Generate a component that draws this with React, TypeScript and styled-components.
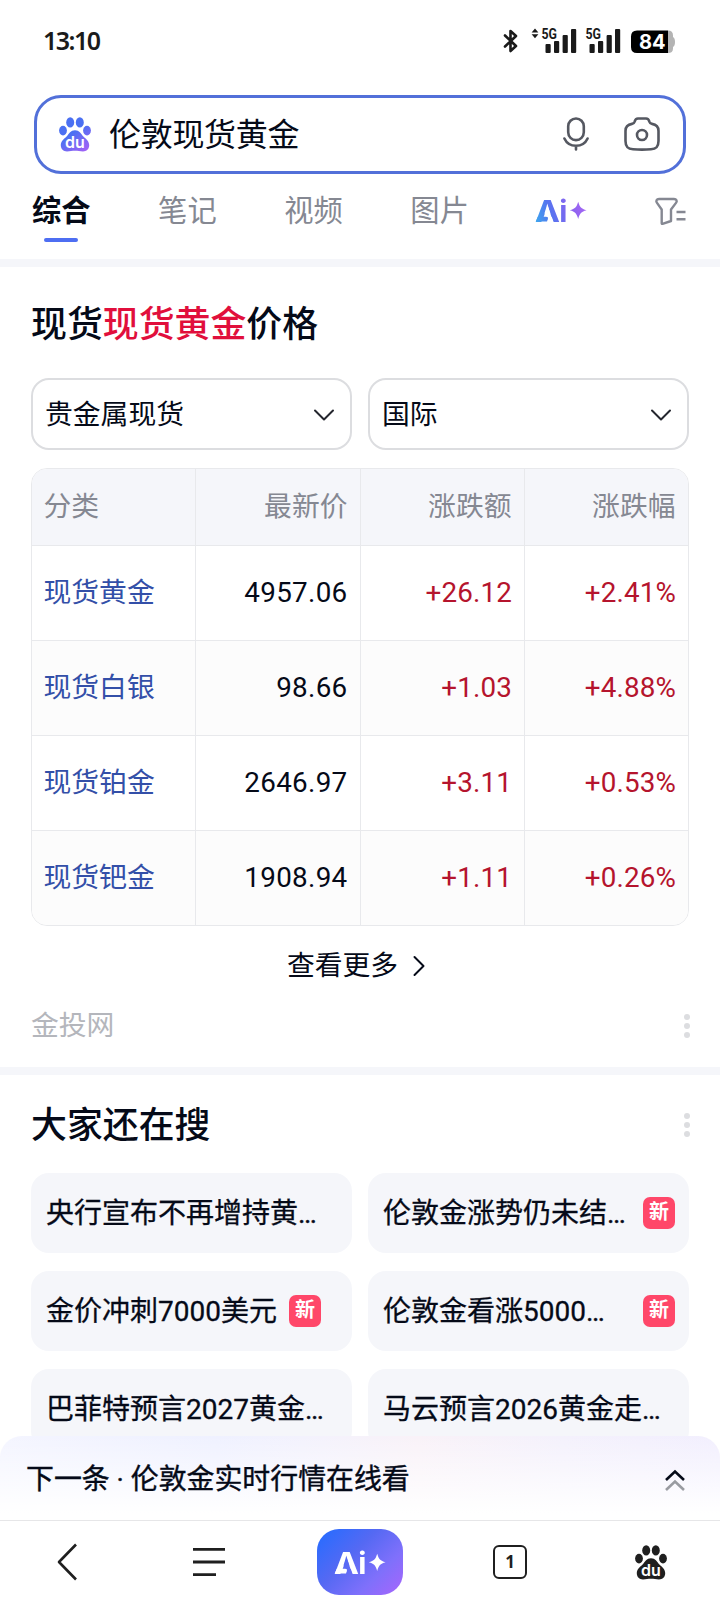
import React from "react";
import styled, { createGlobalStyle } from "styled-components";

const INK = "#050a18";
const GREY = "#858892";
const PANEL = "#f5f6fa";

const Global = createGlobalStyle`
  * { box-sizing: border-box; }
  body {
    margin: 0;
    background: #fff;
    font-family: Roboto, "Noto Sans CJK SC", sans-serif;
    color: ${INK};
  }
  svg { overflow: visible; }
`;

const Page = styled.div`
  width: 720px;
  height: 1604px;
  display: flex;
  flex-direction: column;
  overflow: hidden;
  background: #fff;
`;

const StatusBar = styled.header`
  height: 95px;
  flex: none;
  padding: 27px 44px 0 43px;
  display: flex;
  justify-content: space-between;
  align-items: flex-start;
`;

const Clock = styled.span`
  font: 600 25px/26px "Noto Sans", Roboto, sans-serif;
  letter-spacing: -1.5px;
  color: #1b1b1b;
`;

const SearchBox = styled.div`
  flex: none;
  height: 79px;
  margin: 0 34px;
  border: 3px solid #5270d9;
  border-radius: 27px;
  display: flex;
  align-items: center;
  padding: 0 23px 0 22px;
`;

const Query = styled.span`
  flex: 1;
  margin-left: 18px;
  padding-top: 1px;
  font-size: 32px;
  line-height: 46px;
  letter-spacing: -0.3px;
`;

const SearchTools = styled.div`
  display: flex;
  align-items: center;
  gap: 35px;
  margin-bottom: 2px;
`;

const Tabs = styled.nav`
  flex: none;
  height: 85px;
  padding: 15px 34px 0 32px;
  display: flex;
  justify-content: space-between;
  align-items: flex-start;
`;

const Tab = styled.div<{ $active?: boolean }>`
  display: flex;
  flex-direction: column;
  align-items: center;
  font-size: 29.3px;
  line-height: 44px;
  height: 54px;
  font-weight: ${(p) => (p.$active ? 700 : 400)};
  color: ${(p) => (p.$active ? INK : GREY)};
  &::after {
    content: "";
    width: 34px;
    height: 4px;
    margin-top: 5px;
    border-radius: 2px;
    background: ${(p) => (p.$active ? "#4e6ef2" : "transparent")};
  }
`;

const TabIcon = styled.div`
  height: 43px;
  display: flex;
  align-items: center;
`;

const Divider = styled.div`
  flex: none;
  height: 8px;
  background: ${PANEL};
`;

const Content = styled.main`
  flex: 1;
  min-height: 0;
  overflow: hidden;
`;

const PriceSection = styled.section`
  height: 800px;
  padding: 32px 31px 0;
`;

const Title = styled.h2`
  margin: 0;
  font-size: 35.9px;
  line-height: 52px;
  font-weight: 500;
  em {
    font-style: normal;
    color: #e10f3c;
  }
`;

const Selects = styled.div`
  margin-top: 27px;
  display: flex;
  gap: 16px;
`;

const Select = styled.div`
  flex: 1;
  height: 72px;
  border: 2px solid #dcdde0;
  border-radius: 18px;
  padding: 1px 16px 0 12px;
  display: flex;
  align-items: center;
  justify-content: space-between;
  font-size: 27.8px;
  line-height: 40px;
`;

const Table = styled.div`
  margin-top: 18px;
  border: 1px solid #e8e9ec;
  border-radius: 16px;
  overflow: hidden;
`;

const Row = styled.div<{ $head?: boolean; $shade?: boolean }>`
  display: grid;
  grid-template-columns: 163px 165px 164px 164px;
  height: ${(p) => (p.$head ? 76 : 95)}px;
  background: ${(p) => (p.$head ? PANEL : p.$shade ? "#fcfcfc" : "#fff")};
  & + & {
    border-top: 1px solid #e8e9ec;
  }
`;

const Cell = styled.div<{ $tone?: "head" | "link" | "up" | "plain" }>`
  display: flex;
  align-items: center;
  justify-content: flex-end;
  padding: 0 ${(p) => (p.$tone === "head" || p.$tone === "plain" ? 12.5 : 12)}px 0 11.5px;
  font-size: 27.8px;
  line-height: 40px;
  letter-spacing: ${(p) => (p.$tone === "plain" ? "0.3px" : p.$tone === "up" ? "0.15px" : "0")};
  color: ${(p) =>
    p.$tone === "head" ? GREY : p.$tone === "link" ? "#334fa8" : p.$tone === "up" ? "#b5142d" : INK};
  &:first-child {
    justify-content: flex-start;
  }
  & + & {
    border-left: 1px solid #e8e9ec;
  }
`;

const More = styled.div`
  margin-top: 20px;
  display: flex;
  justify-content: center;
  align-items: center;
  gap: 15px;
  padding-right: 8px;
  font-size: 27.8px;
  line-height: 40px;
`;

const Between = styled.div`
  display: flex;
  justify-content: space-between;
  align-items: center;
`;

const SourceRow = styled(Between)`
  margin-top: 20px;
  font-size: 27.8px;
  line-height: 40px;
  color: #b4b6bc;
`;

const Dots = styled.div`
  display: flex;
  flex-direction: column;
  gap: 3px;
  margin-right: -1px;
  i {
    width: 6px;
    height: 6px;
    border-radius: 50%;
    background: #dcdde0;
  }
`;

const RelatedSection = styled.section`
  padding: 25px 31px 0;
  ${Dots} {
    margin-bottom: 2px;
  }
`;

const Cards = styled.div`
  margin-top: 21px;
  display: grid;
  grid-template-columns: 1fr 1fr;
  gap: 18px 16px;
`;

const Card = styled.div`
  height: 80px;
  border-radius: 18px;
  background: ${PANEL};
  padding: 0 14px 0 15px;
  display: flex;
  align-items: center;
  font-size: 28px;
  line-height: 40px;
  white-space: nowrap;
  -webkit-text-stroke: 0.3px ${INK};
`;

const CardText = styled.span`
  padding-top: 1px;
`;

const Badge = styled.span<{ $end?: boolean }>`
  width: 32px;
  height: 32px;
  margin-left: ${(p) => (p.$end ? "auto" : "12px")};
  border-radius: 7px;
  background: #ff4769;
  color: #fff;
  font-size: 20px;
  font-weight: 700;
  line-height: 31px;
  text-align: center;
  -webkit-text-stroke: 0;
`;

const NextBar = styled.div`
  flex: none;
  position: relative;
  height: 84px;
  margin-top: -84px;
  padding: 3px 33px 0 26px;
  border-radius: 22px 22px 0 0;
  background: linear-gradient(180deg, rgba(255, 255, 255, 0), #fff 92%),
    linear-gradient(90deg, #f4f5ff 0%, #eff1ff 30%, #f3f2fd 42%, #f9f2f8 58%, #f4f1fc 78%, #f2effe 100%);
  display: flex;
  align-items: center;
  justify-content: space-between;
  font-size: 27.9px;
  line-height: 40px;
  -webkit-text-stroke: 0.4px ${INK};
`;

const BottomNav = styled.footer`
  flex: none;
  height: 84px;
  border-top: 1px solid #e6e6e8;
  display: grid;
  grid-template-columns: 134px 150px 152px 148px 133px;
  justify-items: center;
  align-items: center;
  padding-bottom: 1px;
`;

const AiPill = styled.div`
  width: 86px;
  height: 66px;
  border-radius: 22px;
  background: linear-gradient(135deg, #276cff 4%, #5569f3 40%, #7f70fb 70%, #a566fc 98%);
  display: flex;
  align-items: center;
  justify-content: center;
`;

const PageCount = styled.div`
  width: 34px;
  height: 34px;
  border: 2.6px solid #1f1f1f;
  border-radius: 6px;
  text-align: center;
  font: 700 17px/29px "Noto Sans", sans-serif;
  color: #1f1f1f;
`;

const Paw = ({ fill, ink }: { fill: string; ink: string }) => (
  <svg width="32" height="35" viewBox="0 0 32 35">
    <defs>
      <linearGradient id="pawTint" gradientUnits="userSpaceOnUse" x1="10" y1="12" x2="26" y2="34">
        <stop offset="0.2" stopColor="#4b70f2" />
        <stop offset="1" stopColor="#a062f6" />
      </linearGradient>
    </defs>
    <g fill={fill}>
      <ellipse cx="11.2" cy="5.4" rx="4" ry="5.2" />
      <ellipse cx="20.8" cy="5.4" rx="4" ry="5.2" />
      <ellipse cx="4" cy="13.6" rx="3.9" ry="4.9" />
      <ellipse cx="28" cy="13.6" rx="3.9" ry="4.9" />
      <path d="M16 13.2c-4.400 0-5.800 3.400-8.400 6.200C5 22 1.800 23.800 1.800 28.200c0 3.800 2.700 6.200 6.200 6.200 3 0 5.200-.7 8-.7s5 .7 8 .7c3.500 0 6.200-2.400 6.200-6.200 0-4.400-3.200-6.200-5.800-8.800-2.600-2.800-4-6.200-8.400-6.200Z" />
    </g>
    <text x="16" y="31.200" textAnchor="middle" fontFamily="Inter" fontWeight="600" fontSize="16" fill={ink}>
      du
    </text>
  </svg>
);

const AiMark = ({ id, fill }: { id: string; fill: string }) => (
  <svg width="51" height="25" viewBox="0 0 51 25">
    <defs>
      <linearGradient id="aiTint" gradientUnits="userSpaceOnUse" x1="0" y1="22" x2="50" y2="8">
        <stop offset="0" stopColor="#3fa4ee" />
        <stop offset="0.3" stopColor="#5674f0" />
        <stop offset="0.75" stopColor="#8f63f0" />
        <stop offset="1" stopColor="#a768f4" />
      </linearGradient>
      <mask id={id} maskUnits="userSpaceOnUse" x="-3" y="-3" width="57" height="32">
        <rect x="-3" y="-3" width="57" height="32" fill="#fff" />
        <path d="M11.600 7.500 L17.600 25 H5.600 Z" fill="#000" />
      </mask>
    </defs>
    <g fill={fill}>
      <text y="23.500" mask={`url(#${id})`} fontFamily="Inter" fontWeight="700" fontSize="30">
        <tspan x="-0.900" textLength="25" lengthAdjust="spacingAndGlyphs">A</tspan>
        <tspan x="23.300">i</tspan>
      </text>
      <path d="M-0.300 23.500 L1.800 18.800 H10 Q12.600 18.800 11.800 21.200 L11 23.500 Z" />
      <path d="M42.200 3.800 C43.800 9.200 45.200 10.800 50.600 12.300 C45.200 13.900 43.800 15.400 42.200 20.900 C40.600 15.400 39.200 13.900 33.800 12.300 C39.200 10.800 40.600 9.200 42.200 3.800 Z" />
    </g>
  </svg>
);

const StatusIcons = () => (
  <svg width="174" height="26" viewBox="502 27 174 26">
    <path d="M505 35.500 L516 46 L510.500 51 V31 L516 36 L505 46.500" fill="none" stroke="#1a1a1a" strokeWidth="2.600" strokeLinejoin="round" strokeLinecap="round" />
    <path d="M535 28.600 L538.400 32.500 H531.600 Z M535 38.200 L538.400 34.300 H531.600 Z" fill="#1a1a1a" />
    {[0, 44].map((dx) => (
      <g key={dx} fill="#1a1a1a">
        <text x={541.500 + dx} y="38.800" fontFamily="Roboto" fontWeight="700" fontSize="14" textLength="15.500" lengthAdjust="spacingAndGlyphs">
          5G
        </text>
        <rect x={545.500 + dx} y="44" width="5.200" height="9" rx="1" />
        <rect x={554 + dx} y="41" width="5.200" height="12" rx="1" />
        <rect x={562.600 + dx} y="35" width="5.200" height="18" rx="1" />
        <rect x={571 + dx} y="29" width="5.200" height="24" rx="1" />
      </g>
    ))}
    <path d="M668 30.500 q5 0 5 5 v1.500 q2 1 2 5 q0 4 -2 5 v1.500 q0 4.500 -5 4.500 z" fill="#b4b4b4" />
    <path d="M637 30.500 H668 V53 H637 q-6 0 -6 -6 V36.500 q0 -6 6 -6 z" fill="#000" />
    <text x="652.300" y="49.300" textAnchor="middle" fontFamily="Inter" fontWeight="700" fontSize="20" fill="#fff">
      84
    </text>
  </svg>
);

const MicIcon = () => (
  <svg width="26" height="34" viewBox="0 0 26 34" fill="none" stroke="#555861" strokeWidth="2.600" strokeLinecap="round">
    <rect x="5.200" y="1.500" width="15.600" height="21.600" rx="7.800" />
    <path d="M1.400 21.500 C3.500 26 8 28.800 13 28.800 S22.500 26 24.600 21.500 M13 29 V32.500" />
  </svg>
);

const CameraIcon = () => (
  <svg width="36" height="34" viewBox="0 0 36 34" fill="none" stroke="#555861" strokeWidth="2.600" strokeLinejoin="round">
    <path d="M10.500 4.800 C11.300 2 12.200 1.500 14 1.500 H22 C23.800 1.500 24.700 2 25.500 4.800 C26 6.400 26.500 6.700 28 6.900 C33 7.600 34.500 9.800 34.500 14 V24 C34.500 30 32 32 27 32.300 C21 32.700 15 32.700 9 32.300 C4 32 1.500 30 1.500 24 V14 C1.500 9.800 3 7.600 8 6.900 C9.500 6.700 10 6.400 10.500 4.800 Z" />
    <circle cx="18" cy="18" r="5" />
  </svg>
);

const FilterIcon = () => (
  <svg width="31" height="28" viewBox="0 0 31 28" fill="none" stroke="#858892" strokeWidth="2.400" strokeLinejoin="round" strokeLinecap="round">
    <path d="M4 2 H19 C21.500 2 22.500 3.900 21 5.900 L16 12.500 V24 L7.500 26.900 C7 27 6.700 26.700 6.700 26.200 V12.500 L2 5.900 C.6 3.900 1.500 2 4 2 Z" />
    <path d="M21.500 15 H30.500 M21.500 22.200 H30.500" strokeLinecap="butt" />
  </svg>
);

const ChevronDown = () => (
  <svg width="20" height="12" viewBox="0 0 20 12" fill="none" stroke="#24262e" strokeWidth="2" strokeLinecap="round" strokeLinejoin="round">
    <path d="M1 1.500 L10 10.500 L19 1.500" />
  </svg>
);

const MoreDots = () => (
  <Dots>
    <i />
    <i />
    <i />
  </Dots>
);

const rows = [
  ["现货黄金", "4957.06", "+26.12", "+2.41%"],
  ["现货白银", "98.66", "+1.03", "+4.88%"],
  ["现货铂金", "2646.97", "+3.11", "+0.53%"],
  ["现货钯金", "1908.94", "+1.11", "+0.26%"],
];

const related: { text: string; badge?: "inline" | "end" }[] = [
  { text: "央行宣布不再增持黄…" },
  { text: "伦敦金涨势仍未结…", badge: "end" },
  { text: "金价冲刺7000美元", badge: "inline" },
  { text: "伦敦金看涨5000…", badge: "end" },
  { text: "巴菲特预言2027黄金…" },
  { text: "马云预言2026黄金走…" },
];

export default function App() {
  return (
    <Page>
      <Global />
      <StatusBar>
        <Clock>13:10</Clock>
        <StatusIcons />
      </StatusBar>
      <SearchBox>
        <Paw fill="url(#pawTint)" ink="#fff" />
        <Query>伦敦现货黄金</Query>
        <SearchTools>
          <MicIcon />
          <CameraIcon />
        </SearchTools>
      </SearchBox>
      <Tabs>
        <Tab $active>综合</Tab>
        <Tab>笔记</Tab>
        <Tab>视频</Tab>
        <Tab>图片</Tab>
        <TabIcon>
          <AiMark id="aiTab" fill="url(#aiTint)" />
        </TabIcon>
        <TabIcon>
          <FilterIcon />
        </TabIcon>
      </Tabs>
      <Divider />
      <Content>
        <PriceSection>
          <Title>
            现货<em>现货黄金</em>价格
          </Title>
          <Selects>
            <Select>
              贵金属现货
              <ChevronDown />
            </Select>
            <Select>
              国际
              <ChevronDown />
            </Select>
          </Selects>
          <Table>
            <Row $head>
              {["分类", "最新价", "涨跌额", "涨跌幅"].map((h) => (
                <Cell key={h} $tone="head">
                  {h}
                </Cell>
              ))}
            </Row>
            {rows.map(([name, price, change, pct], i) => (
              <Row key={name} $shade={i % 2 === 1}>
                <Cell $tone="link">{name}</Cell>
                <Cell $tone="plain">{price}</Cell>
                <Cell $tone="up">{change}</Cell>
                <Cell $tone="up">{pct}</Cell>
              </Row>
            ))}
          </Table>
          <More>
            查看更多
            <svg width="12" height="20" viewBox="0 0 12 20" fill="none" stroke={INK} strokeWidth="2" strokeLinecap="round" strokeLinejoin="round">
              <path d="M1.500 1 L10.500 10 L1.500 19" />
            </svg>
          </More>
          <SourceRow>
            金投网
            <MoreDots />
          </SourceRow>
        </PriceSection>
        <Divider />
        <RelatedSection>
          <Between>
            <Title>大家还在搜</Title>
            <MoreDots />
          </Between>
          <Cards>
            {related.map((r) => (
              <Card key={r.text}>
                <CardText>{r.text}</CardText>
                {r.badge && <Badge $end={r.badge === "end"}>新</Badge>}
              </Card>
            ))}
          </Cards>
        </RelatedSection>
      </Content>
      <NextBar>
        <span>下一条 · 伦敦金实时行情在线看</span>
        <svg width="24" height="24" viewBox="0 0 24 24" fill="none" strokeWidth="2.600">
          <path d="M3 12 L12 3.500 L21 12" stroke={INK} />
          <path d="M3 22 L12 13.500 L21 22" stroke="#999ba1" />
        </svg>
      </NextBar>
      <BottomNav>
        <svg width="20" height="38" viewBox="0 0 20 38" fill="none" stroke="#1f1f1f" strokeWidth="2.600" strokeLinejoin="round">
          <path d="M19 1.500 L2 19 L19 36.500" />
        </svg>
        <svg width="32" height="28" viewBox="0 0 32 28" stroke="#1f1f1f" strokeWidth="2.800">
          <path d="M0 1.400 H32 M0 14 H32 M0 26.600 H23" />
        </svg>
        <AiPill>
          <AiMark id="aiNav" fill="#fff" />
        </AiPill>
        <PageCount>1</PageCount>
        <Paw fill="#1f1f1f" ink="#fff" />
      </BottomNav>
    </Page>
  );
}
